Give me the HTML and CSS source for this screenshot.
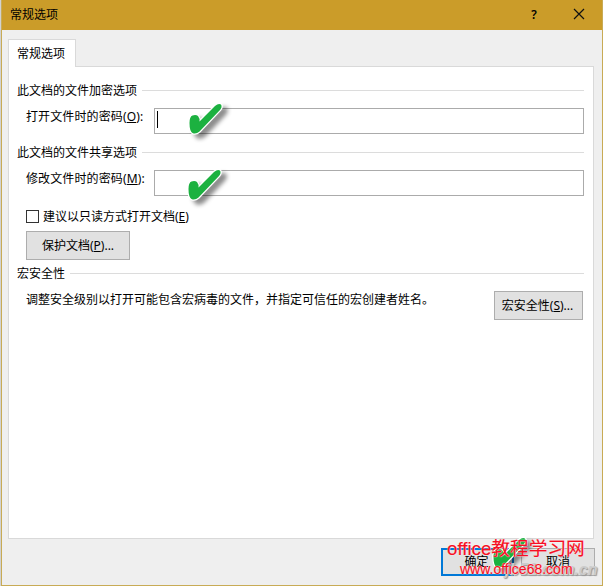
FILE: index.html
```html
<!DOCTYPE html>
<html lang="zh-CN">
<head>
<meta charset="utf-8">
<title>常规选项</title>
<link rel="stylesheet" href="styles.css">
</head>
<body>
<svg class="defs" width="0" height="0" aria-hidden="true">
  <symbol id="tick" viewBox="0 0 50 45" overflow="visible">
    <path d="M8.500 17.500 Q5.500 18.500 5.500 25 Q5.500 33 8.500 35 Q12 36.500 15.500 33.500 L36 12 Q38.500 9 37 6.500 Q34.500 5 31 8 L15.500 23.500 Q16 20.500 14 18 Q12 16.500 8.500 17.500Z"/>
  </symbol>
</svg>
<main class="dialog">
  <header class="titlebar">
    <h1>常规选项</h1>
    <span class="help">?</span>
    <svg class="close" viewBox="0 0 12 12"><path d="M1 1 11 11M11 1 1 11"/></svg>
  </header>
  <div class="content">
    <nav class="tabs"><span class="tab">常规选项</span></nav>
    <section class="panel">
      <h2 class="group">此文档的文件加密选项</h2>
      <div class="field field-open">
        <label>打开文件时的密码(<u>O</u>):</label>
        <div class="input"><i class="caret"></i><svg class="tick tick-open"><use href="#tick"/></svg></div>
      </div>
      <h2 class="group">此文档的文件共享选项</h2>
      <div class="field field-edit">
        <label>修改文件时的密码(<u>M</u>):</label>
        <div class="input"><svg class="tick tick-edit"><use href="#tick"/></svg></div>
      </div>
      <div class="check"><i class="box"></i><span>建议以只读方式打开文档(<u>E</u>)</span></div>
      <button class="btn protect">保护文档(<u>P</u>)...</button>
      <h2 class="group group-macro">宏安全性</h2>
      <div class="macro">
        <p>调整安全级别以打开可能包含宏病毒的文件，并指定可信任的宏创建者姓名。</p>
        <button class="btn security">宏安全性(<u>S</u>)...</button>
      </div>
    </section>
    <footer class="actions">
      <button class="btn ok">确定</button>
      <button class="btn cancel">取消</button>
      <svg class="tick tick-ok"><use href="#tick"/></svg>
      <span class="ghost">jb51.com.cn</span>
      <span class="mark mark-name">office教程学习网</span>
      <span class="mark mark-url">www.office68.com</span>
    </footer>
  </div>
</main>
</body>
</html>
```
FILE: styles.css
```css
* { box-sizing: border-box; }
body { margin: 0; background: #d2d2d2; font: 12px/16px "Noto Sans", "Noto Sans CJK SC", sans-serif; color: #000; overflow: hidden; }
h1, h2, p { margin: 0; font-size: 12px; font-weight: 400; }
.defs { position: absolute; }
.dialog { width: 602px; height: 586px; margin-left: 1px; border: 1px solid #c8ab55; border-top: 0; background: #efefef; display: flex; flex-direction: column; }
.titlebar { height: 30px; background: #cb9c29; display: flex; align-items: center; padding: 0 17px 1px 8px; }
.titlebar h1 { flex: 1; }
.help { width: 12px; font-size: 12px; font-weight: 600; margin-right: 33px; text-align: center; }
.close { width: 12px; height: 12px; margin-bottom: 1px; fill: none; stroke: #111; stroke-width: 1.2; }
.content { padding: 9px 8px 0 6px; }
.tabs { display: flex; height: 27px; }
.tab { width: 68px; height: 28px; border: 1px solid #d9d9d9; border-bottom: 0; background: #fff; padding: 6px 0 0 8px; z-index: 1; white-space: nowrap; }
.panel { height: 473px; border: 1px solid #d9d9d9; background: #fff; padding: 16px 9px 0 8px; }
.group { display: flex; align-items: center; gap: 5px; height: 16px; white-space: nowrap; }
.group::after { content: ""; flex: 1; height: 1px; margin-bottom: 2px; background: #dcdcdc; }
.field { display: flex; padding-left: 9px; height: 46px; }
.field-open { padding-top: 9px; }
.field-edit { padding-top: 9px; height: 48px; }
.field label { width: 128px; white-space: nowrap; padding-top: 1px; letter-spacing: .12px; }
.input { flex: 1; height: 26px; border: 1px solid #ababab; background: #fff; position: relative; }
.caret { display: block; width: 1px; height: 17px; margin: 2px 0 0 2px; background: #000; }
.tick { position: absolute; width: 50px; height: 45px; overflow: visible; fill: #1cb140; stroke: #fff; stroke-width: 2.5; paint-order: stroke; filter: drop-shadow(5px 4px 2px rgba(0,0,0,.45)); }
.tick-open { left: 29px; top: -11px; }
.tick-edit { left: 28px; top: -7px; }
.check { display: flex; align-items: center; gap: 4px; height: 16px; padding-left: 9px; }
.box { width: 13px; height: 13px; margin-bottom: 1px; border: 1px solid #333; background: #fff; }
.btn { font: inherit; color: #000; background: #e1e1e1; border: 1px solid #adadad; padding: 0; white-space: nowrap; }
.protect { display: block; width: 104px; height: 29px; margin: 6px 0 0 9px; }
.group-macro { margin-top: 6px; }
.macro { display: flex; justify-content: space-between; padding: 9px 1px 0 9px; }
.macro p { white-space: nowrap; padding-top: 1px; }
.security { width: 89px; height: 29px; padding-right: 2px; }
.actions { position: relative; display: flex; justify-content: flex-end; gap: 7px; margin-right: -1px; padding-top: 9px; }
.ok { width: 73px; height: 28px; border: 2px solid #0078d7; padding-right: 2px; }
.cancel { width: 74px; height: 28px; }
.tick-ok { left: 480px; top: -7px; }
.ghost, .mark { position: absolute; white-space: nowrap; }
.ghost { left: 497px; top: 21px; font: italic bold 16px/20px "Liberation Sans", sans-serif; color: #ccc; text-shadow: 1px 1px 1px #999; }
.mark { color: #f50f23; text-shadow: 0 0 1px #fff, 0 0 1px #fff; }
.mark-name { left: 439px; top: -2px; font: 18.7px/24px "Liberation Sans", "Noto Sans CJK SC", sans-serif; -webkit-text-stroke: .2px #f50f23; }
.mark-url { left: 452px; top: 21px; font: 14px/18px "Liberation Sans", sans-serif; -webkit-text-stroke: .2px #f50f23; }
```
